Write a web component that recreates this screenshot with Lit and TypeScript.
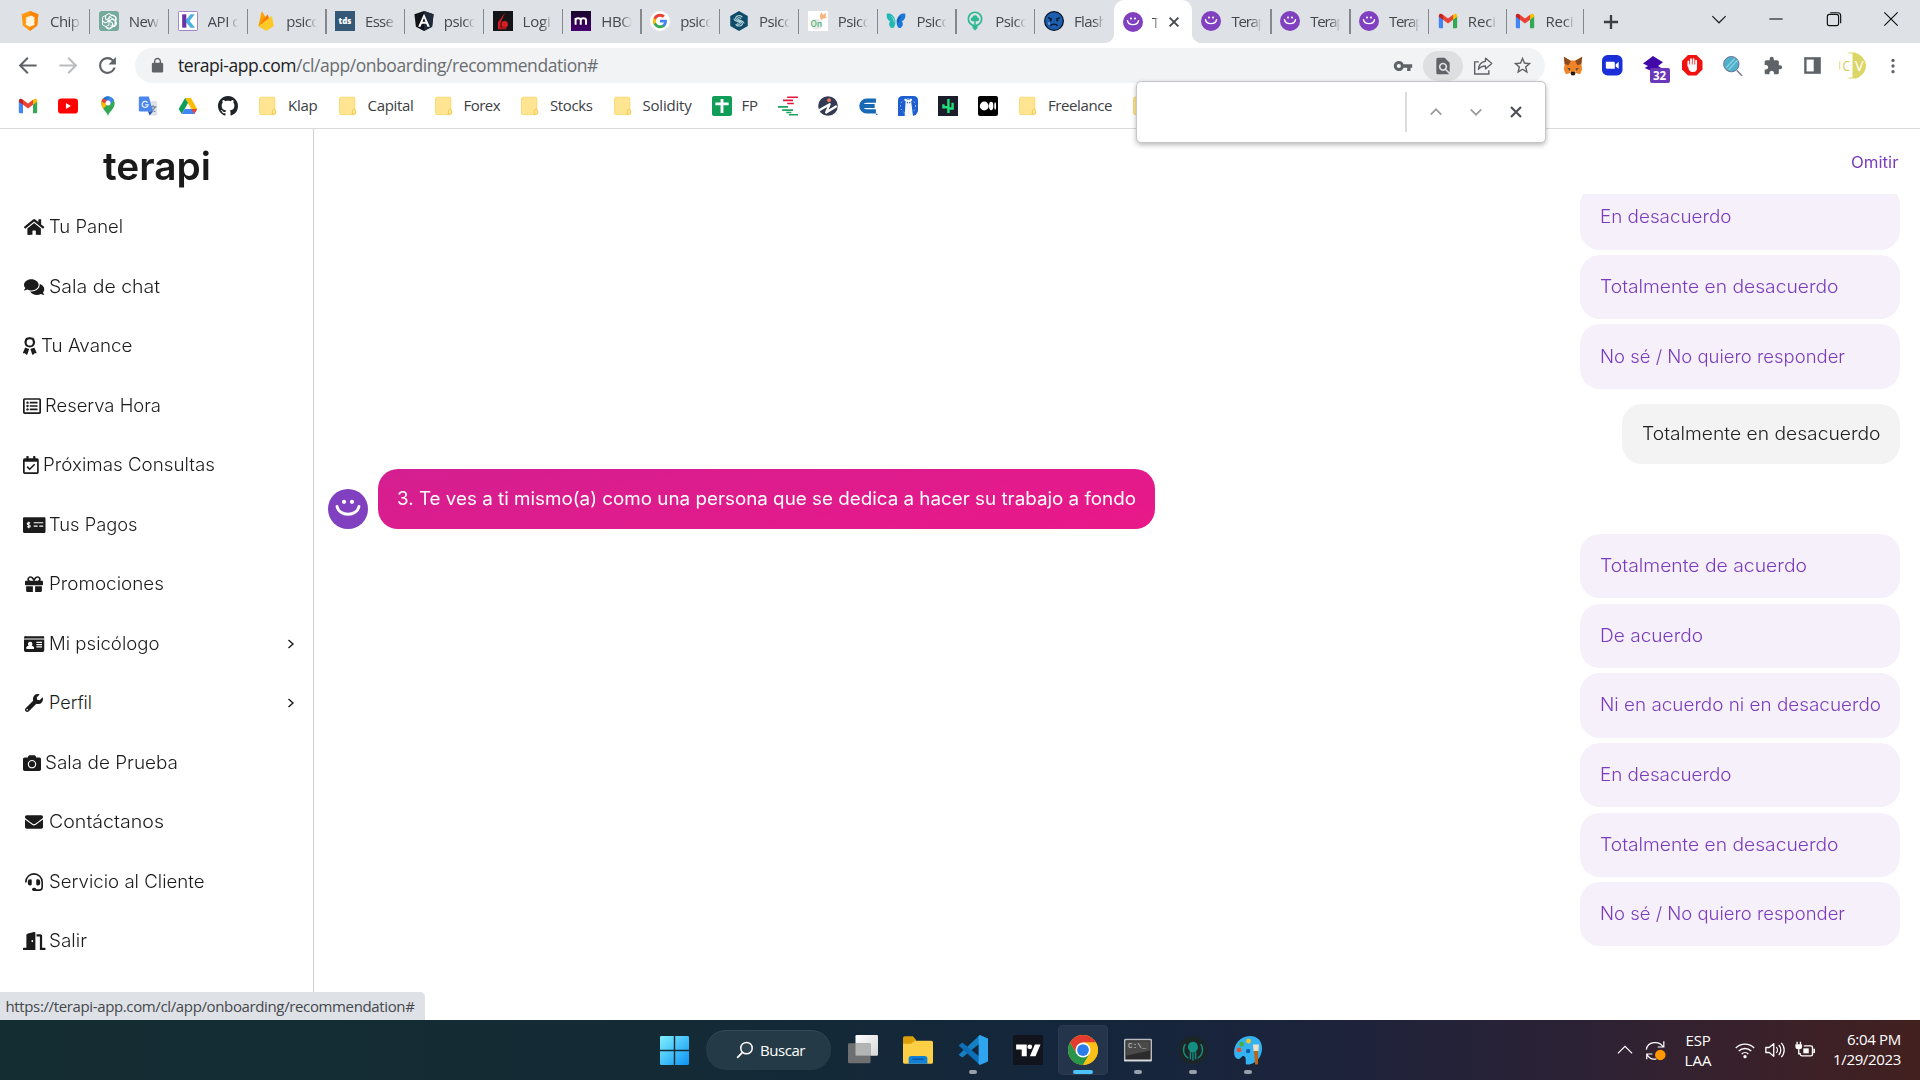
import { LitElement, html, svg, css, nothing, TemplateResult } from "lit";
import { customElement, property } from "lit/decorators.js";
import { classMap } from "lit/directives/class-map.js";

type Art = TemplateResult;

const smile = svg`<circle cx="12" cy="12" r="12" fill="#8040bf"/><circle cx="9.6" cy="7.700" r="1.25" fill="#fff"/><circle cx="14.4" cy="7.700" r="1.25" fill="#fff"/><path d="M5.4 10.400c1 6.300 12.200 6.300 13.200 0" fill="none" stroke="#fff" stroke-width="1.700" stroke-linecap="round"/>`;
const gmail = svg`<path d="M1 19.5V6l5 3.6v11.2H2.3A1.3 1.3 0 0 1 1 19.5z" fill="#4285f4"/><path d="M23 19.5V6l-5 3.6v11.2h3.7a1.3 1.3 0 0 0 1.3-1.3z" fill="#34a853"/><path d="M6 4.6l6 4.5 6-4.5v6L12 15l-6-4.4z" fill="#ea4335"/><path d="M1 5.600C1 3 3.600 2.600 5 3.800l1 .8v6L1 7z" fill="#c5221f"/><path d="M23 5.600c0-2.600-2.600-3-4-1.800l-1 .8v6L23 7z" fill="#fbbc04"/>`;
const folder = svg`<path d="M3.400 1.500h15.200a1.600 1.600 0 0 1 1.600 1.600v13.400l.8 1.200v2.600a2 2 0 0 1-2 2H3.400a1.600 1.600 0 0 1-1.600-1.600V3.100a1.600 1.600 0 0 1 1.600-1.600z" fill="#ffe591" stroke="#f8d568" stroke-width="1"/><path d="M17.200 22v-4.200c0-2.400 4-2.400 4 0v2.400c0 1.200-1 1.800-2.200 1.800z" fill="#ffe591" stroke="#eec94e" stroke-width="1.100"/>`;

const art: Record<string, Art> = {
  smile,
  gmail,
  folder,
  chip: svg`<path d="M12 0l10 3.800-1.300 13.600L12 24 3.300 17.400 2 3.800z" fill="#ff980e"/><path d="M12 0l10 3.800-1.300 13.600L12 24z" fill="#ff8508"/><path d="M7 8l6.500-2.500 4 2.200v2l-1 .8 1 .7v2l-1 .9 1 .8v1.600L12 19l-5-2.600v-2l1-.9-1-.9v-1.700l1-.9L7 9z" fill="#fff5e0"/>`,
  gpt: svg`<rect width="24" height="24" rx="4" fill="#75a99b"/><g fill="none" stroke="#fff" stroke-width="1.200"><path d="M12 12V7.200l4-2.200c5 0 6 5 3.500 7.500"/><path d="M9 10.300l4.500-2.700 5.300 3.200c2.200 4.200-1.500 7.700-5 6.700"/><path d="M12 12V7.200l4-2.200c5 0 6 5 3.500 7.500" transform="rotate(60 12 12)"/><path d="M12 12V7.200l4-2.200c5 0 6 5 3.500 7.500" transform="rotate(120 12 12)"/><path d="M12 12V7.200l4-2.200" transform="rotate(180 12 12)"/><path d="M12 12V7.200l4-2.200" transform="rotate(240 12 12)"/><path d="M12 12V7.200l4-2.200" transform="rotate(300 12 12)"/><path d="M12 3l7.800 4.500v9L12 21l-7.800-4.500v-9z" stroke-linejoin="round"/></g>`,
  klap: svg`<rect x=".5" y=".5" width="23" height="23" rx="1.500" fill="#fff" stroke="#9a7cc4" stroke-width="1.200"/><path d="M5 4h5v16H5z" fill="#6d2fa8"/><path d="M20 4h-5l-6.500 8L15 20h5.500L14 12z" fill="#4db0e0"/><path d="M10 10l-2 2 2 2z" fill="#1f5ea8"/>`,
  firebase: svg`<path d="M3 18L6.500 1.500c.1-.6.900-.7 1.200-.2L18 18l-6.500 5z" fill="#ffa000"/><path d="M3 18L13 5c.3-.5 1-.5 1.300 0l3 7z" fill="#f57c00"/><path d="M3 18L18.200 6.500c.4-.4 1-.2 1.100.3L21.500 18l-8 5.200c-.8.500-1.700.5-2.500 0z" fill="#ffca28"/>`,
  tds: svg`<rect width="24" height="24" fill="#355876"/><text x="12" y="15.600" text-anchor="middle" font-family="Open Sans, sans-serif" font-weight="800" font-size="9.500" fill="#fff">tds</text>`,
  angular: svg`<path d="M12 0l11.500 4-1.800 15L12 24l-9.700-5L.5 4z" fill="#111318"/><path d="M12 0l11.500 4-1.800 15L12 24z" fill="#1f2a3a"/><path d="M12 3.200L5 18.800h2.900l1.400-3.500h5.400l1.400 3.500H19zm0 5.300l1.900 4.500h-3.800z" fill="#fff" fill-rule="evenodd"/>`,
  logi: svg`<rect width="24" height="24" fill="#151416"/><path d="M14.500 2L6 13.500V22h3v-7.500z" fill="#d81e24"/><circle cx="14" cy="16" r="3.900" fill="#d81e24"/><path d="M8 19h8v3H7z" fill="#a8161b"/>`,
  hbo: svg`<defs><linearGradient id="hb" x2="0" y2="1"><stop stop-color="#170728"/><stop offset="1" stop-color="#45006e"/></linearGradient></defs><rect width="24" height="24" fill="url(#hb)"/><path d="M5.500 16.500V8.500M5.500 11c0-3.200 6.200-3.200 6.200 0v5.500M11.700 11c0-3.200 6.300-3.200 6.300 0v5.500" fill="none" stroke="#fff" stroke-width="2.400"/>`,
  google: svg`<circle cx="12" cy="12" r="12" fill="#fff"/><g transform="translate(2.600 2.600) scale(.785)"><path d="M22.560 12.250c0-.78-.07-1.530-.2-2.250H12v4.260h5.920c-.26 1.370-1.040 2.530-2.210 3.310v2.770h3.570c2.080-1.920 3.280-4.740 3.280-8.090z" fill="#4285f4"/><path d="M12 23c2.970 0 5.460-.98 7.280-2.660l-3.570-2.770c-.98.66-2.230 1.060-3.710 1.060-2.860 0-5.290-1.930-6.160-4.530H2.180v2.840C3.990 20.530 7.700 23 12 23z" fill="#34a853"/><path d="M5.840 14.090c-.22-.66-.35-1.360-.35-2.090s.13-1.430.35-2.090V7.070H2.180C1.430 8.550 1 10.220 1 12s.43 3.450 1.180 4.930z" fill="#fbbc05"/><path d="M12 5.380c1.620 0 3.060.56 4.210 1.640l3.150-3.150C17.450 2.090 14.970 1 12 1 7.700 1 3.990 3.470 2.180 7.070l3.660 2.840c.87-2.600 3.300-4.530 6.160-4.530z" fill="#ea4335"/></g>`,
  hexa: svg`<path d="M12 0l10.500 6v12L12 24 1.500 18V6z" fill="#0f4c68"/><path d="M16 7.500c-2-3-8-2.300-8 1.200 0 4 8 2.500 8 6.300 0 3.500-6 4-8 1M14.500 9c-1.500-1.500-4.500-1-4 .5.500 1.800 7.500 1.500 7.500 5.500M9.500 15c1.500 1.500 4.500 1 4-.5-.5-1.800-7.500-1.500-7.500-5.500" fill="none" stroke="#b8d8dc" stroke-width="1.300"/>`,
  onp: svg`<rect width="24" height="24" fill="#fff"/><circle cx="10.500" cy="16" r="6.500" fill="#e9e9e9"/><text x="10" y="19" text-anchor="middle" font-family="Inter, sans-serif" font-weight="600" font-size="10" fill="#5cb883">On</text><path d="M14 6.500l2-5 2 3 4-2-1 4 2 2-5 .5-2 2z" fill="#f7b27e"/>`,
  butterfly: svg`<path d="M11.300 12C10 5 5 2 .8 3.500c-.5 4 1 7.500 4.200 8.800-2 2-1.500 6.500 1.500 8 3 1 4.400-2.300 4.700-6z" fill="#22b8b4"/><path d="M12.700 12C14 5 19 2 23.200 3.500c.5 4-1 7.500-4.200 8.800 2 2 1.500 6.500-1.500 8-3 1-4.400-2.300-4.700-6z" fill="#1c78d8"/><path d="M6.500 6.500c2 1.500 3.200 4 3.400 7" stroke="#8fe0dc" stroke-width="1.200" fill="none"/><path d="M17.500 6.500c-2 1.500-3.200 4-3.400 7" stroke="#0f58a4" stroke-width="1.600" fill="none"/>`,
  bulb: svg`<circle cx="12" cy="9.500" r="8" fill="none" stroke="#2fb895" stroke-width="2"/><path d="M12 23.500l-3-3v-3h6v3z" fill="#2fb895"/><path d="M12 5a3.200 3.200 0 0 1 3.200 2.700c2.600.5 2.600 4.500-.7 4.500-1 0-1.500-.3-2.500-.3s-1.500.3-2.500.3c-3.300 0-3.300-4-.7-4.500A3.200 3.200 0 0 1 12 5z" fill="#2fb895"/><path d="M12 10v8" stroke="#2fb895" stroke-width="1.800"/>`,
  flash: svg`<circle cx="12" cy="12" r="11.200" fill="#1d5fae" stroke="#07162a" stroke-width="1.600"/><path d="M5 8l4.500 2M19 8l-4.500 2M7.500 18c2-3 7-3 9 0" stroke="#07162a" stroke-width="1.600" fill="none"/><circle cx="8" cy="11.500" r="1.200" fill="#07162a"/><circle cx="16" cy="11.500" r="1.200" fill="#07162a"/><path d="M6 13.500v3" stroke="#9fd0ff" stroke-width="1.200"/>`,
  youtube: svg`<rect y="3" width="24" height="18" rx="4" fill="#f00"/><path d="M9.500 8.500v7l6-3.500z" fill="#fff"/>`,
  maps: svg`<path d="M12 24c-1-5-8-8-8-15.500A8 8 0 0 1 12 .5a8 8 0 0 1 8 8C20 16 13 19 12 24z" fill="#34a853"/><path d="M4 8.500C4 11.500 5 13.500 6.500 15.300L14.500 6 8 1.600A8 8 0 0 0 4 8.500z" fill="#fbbc04"/><path d="M6 3.300a8 8 0 0 1 8.500-2.500L8.500 8z" fill="#1a73e8"/><path d="M6 3.300A8 8 0 0 0 4.200 7L9 9l3-4z" fill="#ea4335"/><path d="M14.400.8A8 8 0 0 1 19 4.700L14 11l-4-4.500z" fill="#4285f4"/><circle cx="12" cy="8.500" r="3" fill="#fff"/>`,
  translate: svg`<path d="M9 6h12.500a1.500 1.500 0 0 1 1.500 1.500V22a1.500 1.500 0 0 1-1.500 1.500H14z" fill="#dfe3e8"/><path d="M14 13h8M18 11v2M20.500 13c-1 3-3 5-5 6M15.800 14c1 2.500 3 4.500 5 5" stroke="#6f7f94" stroke-width="1.300" fill="none"/><path d="M2.500.5H13L18 18.500H2.500A1.500 1.500 0 0 1 1 17V2A1.500 1.500 0 0 1 2.500.5z" fill="#4a86ee"/><path d="M12 18.500h6l-4 5z" fill="#2b56b5"/><path d="M11.500 8A3.600 3.600 0 1 0 12.200 10.500H8.600" fill="none" stroke="#e8f0ff" stroke-width="1.500"/>`,
  drive: svg`<path d="M8.500 2.500h7L23 15.500h-7z" fill="#fbbc04"/><path d="M8.500 2.500L.8 15.500 4.500 21.500 12 8.500z" fill="#0f9d58"/><path d="M4.500 21.500L8 15.500h15l-3.500 6z" fill="#4285f4"/><path d="M23 15.500h-7l3.500 6z" fill="#ea4335"/>`,
  github: svg`<path transform="scale(1.500)" fill="#1f2328" d="M8 0C3.580 0 0 3.580 0 8c0 3.540 2.290 6.530 5.470 7.590.4.07.55-.17.55-.38 0-.19-.01-.82-.01-1.490-2.010.37-2.530-.49-2.690-.94-.09-.23-.48-.94-.82-1.130-.28-.15-.68-.52-.01-.53.63-.01 1.080.58 1.230.82.72 1.210 1.870.87 2.330.66.07-.52.28-.87.51-1.070-1.780-.2-3.640-.89-3.640-3.950 0-.87.31-1.590.82-2.150-.08-.2-.36-1.020.08-2.120 0 0 .67-.21 2.200.82.64-.18 1.320-.27 2-.27s1.360.09 2 .27c1.530-1.040 2.200-.82 2.200-.82.44 1.100.16 1.920.08 2.120.51.56.82 1.270.82 2.150 0 3.070-1.870 3.750-3.650 3.950.29.25.54.73.54 1.480 0 1.070-.01 1.930-.01 2.200 0 .21.15.46.55.38A8.010 8.010 0 0 0 16 8c0-4.420-3.580-8-8-8z"/>`,
  sheets: svg`<rect width="24" height="24" rx="2.500" fill="#109d58"/><path d="M12 3.500v17M4 9.500h16" stroke="#fff" stroke-width="3.400"/>`,
  bars: svg`<path d="M11 1.500h13M6 5.300h12M11 9h8" stroke="#e0193c" stroke-width="2"/><path d="M0 13h12M5 17h13M13 22.500h11M10 19.800h6" stroke="#1fa35c" stroke-width="2"/>`,
  indie: svg`<circle cx="12" cy="12" r="11.800" fill="#333a54"/><path d="M1 17.500L14 9.800l-4.200 10L22.500 12" fill="none" stroke="#fff" stroke-width="2.700" stroke-linejoin="round"/><circle cx="13.300" cy="5" r="2.300" fill="#f17b62"/>`,
  cblue: svg`<path d="M21.500 5.500H10.500a6.500 6.500 0 0 0 0 13h11M3 12h17" fill="none" stroke="#1769b4" stroke-width="5"/><path d="M11 9h12M11 15h12" stroke="#fff" stroke-width="1.200"/><circle cx="22.500" cy="22" r="1" fill="#1769b4"/>`,
  bear: svg`<rect width="24" height="24" rx="4" fill="#fff"/><path d="M0 24V5a5 5 0 0 1 5-5h14a5 5 0 0 1 5 5v12a7 7 0 0 1-7 7z" fill="#1e5fd0"/><circle cx="12" cy="12" r="9" fill="none" stroke="#dbe8fb" stroke-width="1.200" stroke-dasharray="1.300 3.300"/><path d="M8 24L9 8c0-5 7-5 7 0l2 16z" fill="#f4f8fc"/><circle cx="9.300" cy="4.800" r="1.500" fill="#f4f8fc"/><circle cx="15.200" cy="4.800" r="1.500" fill="#f4f8fc"/><circle cx="11.300" cy="8" r=".7" fill="#173f86"/><circle cx="14" cy="8" r=".7" fill="#173f86"/>`,
  cactus: svg`<rect width="24" height="24" fill="#1c1d2b"/><path d="M12.500 3.500v17M6.500 10v3.500h6M12.500 15h5V8" fill="none" stroke="#1fe07a" stroke-width="2.900"/>`,
  medium: svg`<rect width="24" height="24" rx="2.500" fill="#000"/><circle cx="7.500" cy="12" r="5.300" fill="#fff"/><ellipse cx="15.800" cy="12" rx="2.600" ry="5" fill="#fff"/><ellipse cx="20.600" cy="12" rx="1.100" ry="4.600" fill="#fff"/>`,
  fox: svg`<path d="M1 1l8 4.500h6L23 1l-1 9 1 6-2.500 6-5-1.500L13.500 23h-3L8.500 20.500l-5 1.500L1 16l1-6z" fill="#f08326"/><path d="M1 1l8.500 5-3 5L2 9.500zM23 1l-8.500 5 3 5 4.500-1.500z" fill="#8a4a22"/><path d="M5 14l4 1-1 3zM19 14l-4 1 1 3z" fill="#4a4a48"/><path d="M9 19h6l-1 4h-4z" fill="#1e1a19"/><path d="M8 18l2 1-1 1.500zM16 18l-2 1 1 1.500z" fill="#f0d8c0"/>`,
  zoomcam: svg`<rect width="24" height="24" rx="6.500" fill="#1b2fd8"/><path d="M4.500 8h9a1.500 1.500 0 0 1 1.500 1.500V16H6a1.500 1.500 0 0 1-1.500-1.500z" fill="#fff"/><path d="M16 11l3.500-3v8L16 13.500z" fill="#fff"/>`,
  stack: svg`<path d="M12 0l12 7.500-6 4.500 6 3.500-9 4.500-13-5.500 4-2.500L0 9z" fill="#4209a8"/>`,
  hand: svg`<path d="M7 0h10l7 7v10l-7 7H7l-7-7V7z" fill="#f0120f"/><path d="M7.500 13V7.500M10.500 12V5M13.500 12V5M16.500 13V6.500" stroke="#fff" stroke-width="2.100" stroke-linecap="round"/><path d="M6.500 11h11v4.500c0 3-2 4.500-4.500 4.500s-4-1-5-3z" fill="#fff"/>`,
  magnify: svg`<path d="M16.500 17l6.500 7" stroke="#7a7f96" stroke-width="1.800"/><circle cx="10" cy="9.800" r="9.200" fill="#4fb0ca" stroke="#6c7394" stroke-width="1.200"/><path d="M4 14L14 3M7 16.500L17.500 5" stroke="#8fd3e4" stroke-width="1.500"/>`,
  panel: svg`<path d="M1.500 1.500h21v21h-21z" fill="#5f6368"/><path d="M4.500 4.500h9v15h-9z" fill="#fff"/>`,
  avatar: svg`<path d="M16 .5h3C26 3 32 9 32 16s-5 13-12 15.500h-4z" fill="#dcd666"/><path d="M9 1.500Q12 .3 16 .3v1.500zM9 30.500q3 1.200 7 1.200v-1.500z" fill="#dcd666"/><path d="M.8 11v10" stroke="#dcd666"/><text x="8.700" y="22.300" text-anchor="middle" font-family="Open Sans, sans-serif" font-size="17" textLength="9" lengthAdjust="spacingAndGlyphs" fill="#d6cf58">C</text><text x="24" y="22.300" text-anchor="middle" font-family="Open Sans, sans-serif" font-size="17" fill="#fff">V</text>`,
  newtab: svg`<path d="M12 3.500v17M3.500 12h17" stroke="#3c4043" stroke-width="2.800"/>`,
  x: svg`<path d="M4.500 4.500l15 15M19.500 4.500l-15 15" stroke="currentColor" stroke-width="3.200" fill="none"/>`,
  up: svg`<path d="M4 16l8-8 8 8" stroke="#9a9da1" stroke-width="2.600" fill="none"/>`,
  down: svg`<path d="M4 8l8 8 8-8" stroke="#9a9da1" stroke-width="2.600" fill="none"/>`,
  wchev: svg`<path d="M4 8.500l8 8 8-8" stroke="#222" stroke-width="1.500" fill="none"/>`,
  wmin: svg`<path d="M4 12h16" stroke="#111" stroke-width="1.300"/>`,
  wmax: svg`<rect x="4" y="6.500" width="13.500" height="13.500" rx="2.500" fill="none" stroke="#111" stroke-width="1.400"/><path d="M7.500 4.500h9a3.500 3.500 0 0 1 3.500 3.500v9" fill="none" stroke="#111" stroke-width="1.400"/>`,
  wclose: svg`<path d="M4 4l16 16M20 4L4 20" stroke="#111" stroke-width="1.400"/>`,
  back: svg`<path fill="#5f6368" d="M21.500 11H6.800l6.300-6.400L11.600 3.200 2.800 12l8.800 8.800 1.500-1.400L6.800 13h14.700z"/>`,
  fwd: svg`<path fill="#babcbe" d="M2.500 11h14.700l-6.300-6.400 1.500-1.400 8.800 8.800-8.800 8.800-1.500-1.400 6.300-6.400H2.500z"/>`,
  reload: svg`<path fill="#5f6368" transform="translate(-2.400 -2.400) scale(1.200)" d="M17.650 6.350A7.958 7.958 0 0 0 12 4c-4.420 0-7.990 3.580-7.990 8s3.570 8 7.990 8c3.730 0 6.840-2.550 7.730-6h-2.080A5.990 5.990 0 0 1 12 18c-3.310 0-6-2.690-6-6s2.690-6 6-6c1.660 0 3.140.69 4.220 1.780L13 11h7V4z"/>`,
  lock: svg`<path fill="#5f6368" d="M18 8h-1V6c0-2.760-2.240-5-5-5S7 3.240 7 6v2H6c-1.100 0-2 .9-2 2v10c0 1.100.9 2 2 2h12c1.100 0 2-.9 2-2V10c0-1.100-.9-2-2-2zM9 8V6c0-1.660 1.340-3 3-3s3 1.340 3 3v2H9z"/>`,
  key: svg`<path fill="#5f6368" d="M12.650 10A5.990 5.990 0 0 0 7 6c-3.310 0-6 2.690-6 6s2.690 6 6 6a5.990 5.990 0 0 0 5.650-4H17v4h4v-4h2v-4H12.650zM7 14.500a2.500 2.500 0 1 1 0-5 2.500 2.500 0 0 1 0 5z"/>`,
  find: svg`<path fill="#5f6368" d="M20 19.590V8l-6-6H6c-1.100 0-1.990.9-1.990 2L4 20c0 1.100.89 2 1.990 2H18c.45 0 .85-.15 1.190-.4l-4.430-4.430c-.8.52-1.740.83-2.760.83-2.760 0-5-2.240-5-5s2.240-5 5-5 5 2.240 5 5c0 1.020-.31 1.960-.83 2.750L20 19.590zM9 13c0 1.660 1.340 3 3 3s3-1.340 3-3-1.340-3-3-3-3 1.340-3 3z"/>`,
  share: svg`<path d="M7 7H2v14.500h17V17" fill="none" stroke="#5f6368" stroke-width="1.700"/><path d="M15 2.500l7.500 6.500L15 15.500V12c-4 0-6.500 1.200-8.500 4C7 10.500 10 7 15 6.300z" fill="none" stroke="#5f6368" stroke-width="1.600" stroke-linejoin="round"/>`,
  star: svg`<path fill="#5f6368" d="M22 9.240l-7.190-.62L12 2 9.190 8.630 2 9.240l5.460 4.730L5.820 21 12 17.270 18.180 21l-1.630-7.030L22 9.240zM12 15.400l-3.760 2.270 1-4.280-3.320-2.880 4.380-.38L12 6.100l1.710 4.040 4.380.38-3.320 2.880 1 4.280L12 15.400z"/>`,
  puzzle: svg`<path fill="#5f6368" d="M20.500 11H19V7c0-1.100-.9-2-2-2h-4V3.500a2.500 2.500 0 0 0-5 0V5H4c-1.100 0-1.990.9-1.990 2v3.800H3.500c1.490 0 2.700 1.210 2.700 2.700s-1.210 2.700-2.700 2.700H2V20c0 1.100.9 2 2 2h3.800v-1.500c0-1.490 1.210-2.700 2.700-2.700s2.700 1.210 2.700 2.700V22H17c1.100 0 2-.9 2-2v-4h1.500a2.500 2.500 0 0 0 0-5z"/>`,
  dots: svg`<circle cx="12" cy="4.500" r="2.200" fill="#5f6368"/><circle cx="12" cy="12" r="2.200" fill="#5f6368"/><circle cx="12" cy="19.500" r="2.200" fill="#5f6368"/>`,
  start: svg`<defs><linearGradient id="st" gradientUnits="userSpaceOnUse" x1="0" y1="0" x2="24" y2="24"><stop stop-color="#7ff0fd"/><stop offset="1" stop-color="#0c93f5"/></linearGradient></defs><path d="M1 0h10.400v11.400H0V1a1 1 0 0 1 1-1zM12.600 0H23a1 1 0 0 1 1 1v10.400H12.600zM0 12.600h11.400V24H1a1 1 0 0 1-1-1zM12.600 12.600H24V23a1 1 0 0 1-1 1H12.600z" fill="url(#st)"/>`,
  search: svg`<circle cx="14" cy="9.500" r="7.600" fill="#2d4350" stroke="#fff" stroke-width="2"/><path d="M8.600 15.200L1.500 22.500" stroke="#fff" stroke-width="2.400"/>`,
  taskview: svg`<defs><linearGradient id="tv1" x2="1" y2="1"><stop stop-color="#fff"/><stop offset="1" stop-color="#d6d6d6"/></linearGradient></defs><rect x="6" y="0" width="18" height="16.500" rx="1" fill="url(#tv1)"/><rect x="0" y="6.500" width="18" height="16" rx="1" fill="#6d6f70"/><path d="M6 6.500h12v10H6z" fill="#b3b5b5"/>`,
  explorer: svg`<path d="M0 2.500A1.500 1.500 0 0 1 1.500 1H8l2.500 3v5H0z" fill="#dba009"/><path d="M0 7h6.500l3-2.500h13A1.500 1.500 0 0 1 24 6v15.500a1.500 1.500 0 0 1-1.500 1.500h-21A1.500 1.500 0 0 1 0 21.500z" fill="#fccf45"/><path d="M4.500 23v-4a2.200 2.200 0 0 1 2.200-2.200h10.600a2.200 2.200 0 0 1 2.200 2.200v4z" fill="#1380d8"/><path d="M7.500 19.300h9" stroke="#0a57a4" stroke-width="1.200"/>`,
  vscode: svg`<path d="M17.500 0v6.500L3.500 18 .5 15.700z" fill="#1580c4"/><path d="M17.500 24v-6.500L3.500 6 .5 8.300z" fill="#0d6fb5"/><path d="M17.500 0L24 2.800v18.400L17.500 24l-1-1V1z" fill="#2ea5ee"/>`,
  tradingview: svg`<rect width="24" height="24" fill="#11141d"/><path d="M2.500 7.500h8.500v9.500H7v-5.500H2.500z" fill="#fff"/><circle cx="13.400" cy="9.400" r="1.900" fill="#fff"/><path d="M17.500 7.500h4.500L18 17h-4.500z" fill="#fff"/>`,
  chrome: svg`<circle cx="12" cy="12" r="12" fill="#fbc116"/><path d="M12 6h10.390A12 12 0 0 0 1.610 6l5.200 9z" fill="#e33b2e"/><path d="M1.610 6A12 12 0 0 0 12 24l5.200-9L6.800 15z" fill="#27964a"/><path d="M17.200 15L12 24A12 12 0 0 0 22.390 6H12z" fill="#fbc116"/><circle cx="12" cy="12" r="6" fill="#fff"/><circle cx="12" cy="12" r="4.700" fill="#2b7de9"/>`,
  cmd: svg`<rect x=".5" y="3" width="23" height="18" rx="1" fill="#2b2b2b" stroke="#b9bcc0" stroke-width="1.400"/><path d="M2 4.500h20v8L2 17z" fill="#4a4a4a"/><path d="M0 21h23.500" stroke="#d5d9dc" stroke-width="1.500"/><text x="3.500" y="10.500" font-family="Liberation Mono, monospace" font-size="6.500" fill="#d8d8d8">C:\\_</text>`,
  kraken: svg`<circle cx="12" cy="12" r="12" fill="#1c2626"/><path d="M12 5c-3 0-4.600 3-4.200 5.500.3 1.500 1.700 2 1.700 3.500h5c0-1.500 1.400-2 1.700-3.500C16.600 8 15 5 12 5z" fill="#148f80"/><path d="M9.800 14v6M12 14v7M14.200 14v6M8 19c-5-3-5-9-2.500-12M16 19c5-3 5-9 2.500-12" fill="none" stroke="#148f80" stroke-width="1.200"/>`,
  paint: svg`<path d="M14 0C6 0 0 7 1 15c.4 4 4 5 5.500 3s3.500-2 4 1c.4 4-1 5 3 4.500C21 22 24 16 24 10S20 0 14 0z" fill="#35b3f0"/><circle cx="5" cy="11.500" r="2" fill="#e8512e"/><circle cx="7" cy="6.800" r="2" fill="#4caf3c"/><circle cx="12.800" cy="4.200" r="2" fill="#f5c523"/><circle cx="12.500" cy="12.500" r="1.800" fill="#0b5aa8"/><path d="M16.500 7h5l-.5 5.500h-4z" fill="#f1dfc4"/><path d="M17.300 12.500h3.400v11h-2.400z" fill="#b8651b"/>`,
  tchev: svg`<path d="M2.500 16.500L12 7l9.500 9.500" stroke="#fff" stroke-width="1.600" fill="none"/>`,
  sync: svg`<path d="M1.500 11C3 1.500 16 .5 20.500 7.500M21.500 1.500v6.500h-7M2 22v-6h6.500M2 16c2.500 5 7 6.500 11 5.500" fill="none" stroke="#fff" stroke-width="1.400"/><circle cx="17.500" cy="17" r="6" fill="#ff9800"/>`,
  wifi: svg`<path d="M1 9.500a15.500 15.500 0 0 1 22 0M4.500 13.300a10.600 10.600 0 0 1 15 0M8 16.800a5.700 5.700 0 0 1 8 0" fill="none" stroke="#fff" stroke-width="1.700"/><circle cx="12" cy="20" r="2" fill="#fff"/>`,
  volume: svg`<path d="M1 9h4l5.500-4.500v15L5 15H1z" fill="none" stroke="#fff" stroke-width="1.600" stroke-linejoin="round"/><path d="M13.500 8.500a5 5 0 0 1 0 7M16.500 6a8.500 8.500 0 0 1 0 12M19.500 3.500a12 12 0 0 1 0 17" fill="none" stroke="#fff" stroke-width="1.500"/>`,
  battery: svg`<path d="M10.500 7H19a2 2 0 0 1 2 2v8a2 2 0 0 1-2 2H8.500a2 2 0 0 1-2-2" fill="none" stroke="#fff" stroke-width="1.700"/><path d="M23 10.500v5" stroke="#fff" stroke-width="2"/><path d="M10 16v-6h6.500v6z" fill="#fff"/><path d="M.5 5h8v3.500a2.500 2.500 0 0 1-2.500 2.500H3A2.500 2.500 0 0 1 .5 8.500z" fill="#fff"/><path d="M2.500 2v3.500M6.500 2v3.500M4.500 11v5.500H7" stroke="#fff" stroke-width="1.600" fill="none"/>`,
};

/* Solid glyphs for the side menu, drawn on a 512-unit high grid. */
const glyphs: Record<string, { w: number; d: Art }> = {
  home: { w: 576, d: svg`<path d="M280.370 148.260L96 300.110V464a16 16 0 0 0 16 16l112.060-.29a16 16 0 0 0 15.920-16V368a16 16 0 0 1 16-16h64a16 16 0 0 1 16 16v95.640a16 16 0 0 0 16 16.050L464 480a16 16 0 0 0 16-16V300L295.670 148.260a12.190 12.190 0 0 0-15.300 0zM571.600 251.470L488 182.560V44.050a12 12 0 0 0-12-12h-56a12 12 0 0 0-12 12v72.610L318.470 43a48 48 0 0 0-61 0L4.340 251.470a12 12 0 0 0-1.600 16.900l25.500 31A12 12 0 0 0 45.150 301l235.220-193.740a12.190 12.190 0 0 1 15.300 0L530.900 301a12 12 0 0 0 16.900-1.600l25.500-31a12 12 0 0 0-1.700-16.930z"/>` },
  comments: { w: 576, d: svg`<path d="M416 192c0-88.400-93.100-160-208-160S0 103.600 0 192c0 34.300 14.100 65.900 38 92-13.400 30.200-35.500 54.200-35.800 54.500-2.200 2.300-2.800 5.700-1.500 8.700S4.800 352 8 352c36.600 0 66.900-12.300 88.700-25 32.200 15.700 70.300 25 111.300 25 114.900 0 208-71.600 208-160zm122 220c23.900-26 38-57.700 38-92 0-66.900-53.500-124.200-129.300-148.100.9 6.600 1.300 13.300 1.300 20.100 0 105.900-107.700 192-240 192-10.800 0-21.300-.8-31.700-1.900C207.800 439.600 281.800 480 368 480c41 0 79.100-9.200 111.300-25 21.800 12.700 52.100 25 88.700 25 3.200 0 6.100-1.900 7.300-4.800 1.300-2.900.7-6.300-1.500-8.700-.3-.3-22.400-24.200-35.800-54.500z"/>` },
  award: { w: 384, d: svg`<path fill-rule="evenodd" d="M192 0l48 14 46 10 34 36 14 46 12 38-12 46-14 46-34 34-46 16-48 12-48-12-46-16-34-34-14-46-12-46 12-38 14-46 34-36 46-10zm0 66a88 88 0 1 0 0 176 88 88 0 0 0 0-176z"/><path d="M62 300c36 34 66 18 112 38l-52 158c-4 12-18 16-28 8l-40-44-38 4c-14 0-22-12-16-24zM322 300c-36 34-66 18-112 38l52 158c4 12 18 16 28 8l40-44 38 4c14 0 22-12 16-24z"/>` },
  list: { w: 512, d: svg`<path fill-rule="evenodd" d="M464 32H48C21.490 32 0 53.490 0 80v352c0 26.510 21.490 48 48 48h416c26.510 0 48-21.490 48-48V80c0-26.510-21.490-48-48-48zm-6 400H54a6 6 0 0 1-6-6V86a6 6 0 0 1 6-6h404a6 6 0 0 1 6 6v340a6 6 0 0 1-6 6z"/><path d="M192 136h212a12 12 0 0 1 12 12v24a12 12 0 0 1-12 12H192zM192 232h212a12 12 0 0 1 12 12v24a12 12 0 0 1-12 12H192zM192 328h212a12 12 0 0 1 12 12v24a12 12 0 0 1-12 12H192z"/><circle cx="128" cy="160" r="34"/><circle cx="128" cy="256" r="34"/><circle cx="128" cy="352" r="34"/>` },
  calendar: { w: 448, d: svg`<path fill-rule="evenodd" d="M400 64h-48V12a12 12 0 0 0-12-12h-40a12 12 0 0 0-12 12v52H160V12a12 12 0 0 0-12-12h-40a12 12 0 0 0-12 12v52H48a48 48 0 0 0-48 48v352a48 48 0 0 0 48 48h352a48 48 0 0 0 48-48V112a48 48 0 0 0-48-48zm-6 400H54a6 6 0 0 1-6-6V160h352v298a6 6 0 0 1-6 6z"/><path d="M118 304l72 72 142-142" fill="none" stroke="currentColor" stroke-width="46"/>` },
  money: { w: 640, d: svg`<path fill-rule="evenodd" d="M30 32h580a30 30 0 0 1 30 30v388a30 30 0 0 1-30 30H30a30 30 0 0 1-30-30V62a30 30 0 0 1 30-30zm274 144v32h272v-32zm0 96v34h112v-34zm160 0v34h112v-34z"/><path d="M204 206c-30-28-84-20-84 14 0 42 88 24 88 66 0 38-58 42-88 12M162 164v184" fill="none" stroke="#fff" stroke-width="30"/>` },
  gift: { w: 512, d: svg`<path d="M32 448c0 17.700 14.300 32 32 32h160V320H32zM288 480h160c17.700 0 32-14.300 32-32V320H288z"/><path fill-rule="evenodd" d="M480 160h-42c6-12 10-26 10-40 0-49-39-88-88-88-41 0-68 21-103 69-35-48-62-69-103-69-49 0-88 39-88 88 0 14 4 28 10 40H32c-18 0-32 14-32 32v80c0 9 7 16 16 16h480c9 0 16-7 16-16v-80c0-18-14-32-32-32zm-326 0c-22 0-40-18-40-40s18-40 40-40c20 0 34 3 86 80zm204 0h-86c52-77 66-80 86-80 22 0 40 18 40 40s-18 40-40 40z"/>` },
  idcard: { w: 576, d: svg`<path d="M48 32h480a48 48 0 0 1 48 40v24H0V72a48 48 0 0 1 48-40z"/><path fill-rule="evenodd" d="M0 128h576v304a48 48 0 0 1-48 48H48a48 48 0 0 1-48-48zm176 64a64 64 0 0 0-42 112c-40 4-72 32-72 68 0 9 7 16 16 28h196c9-12 16-19 16-28 0-36-32-64-72-68a64 64 0 0 0-42-112zm176 0v32h160v-32zm0 64v32h160v-32zm0 64v32h160v-32z"/>` },
  wrench: { w: 512, d: svg`<path d="M507.730 109.100c-2.240-9.030-13.540-12.090-20.120-5.510l-74.360 74.360-67.880-11.310-11.310-67.880 74.360-74.360c6.620-6.620 3.430-17.900-5.660-20.160-47.380-11.740-99.550.91-136.580 37.930-39.640 39.640-50.550 97.100-34.050 147.200L18.740 402.760c-24.990 24.990-24.990 65.510 0 90.500 24.990 24.990 65.510 24.990 90.500 0l213.210-213.210c50.120 16.710 107.470 5.680 147.370-34.220 37.070-37.070 49.700-89.320 37.910-136.730zM64 472c-13.250 0-24-10.750-24-24 0-13.260 10.750-24 24-24s24 10.740 24 24c0 13.250-10.750 24-24 24z"/>` },
  camera: { w: 512, d: svg`<path d="M512 144v288c0 26.500-21.500 48-48 48H48c-26.500 0-48-21.500-48-48V144c0-26.500 21.500-48 48-48h88l12.300-32.900c7-18.700 24.900-31.100 44.900-31.100h125.500c20 0 37.900 12.400 44.900 31.100L376 96h88c26.500 0 48 21.500 48 48zM376 288c0-66.200-53.800-120-120-120s-120 53.800-120 120 53.800 120 120 120 120-53.800 120-120zm-32 0c0 48.500-39.500 88-88 88s-88-39.500-88-88 39.500-88 88-88 88 39.500 88 88z"/>` },
  mail: { w: 512, d: svg`<path d="M502.300 190.800c3.900-3.100 9.700-.2 9.700 4.700V400c0 26.500-21.500 48-48 48H48c-26.500 0-48-21.500-48-48V195.600c0-5 5.700-7.800 9.700-4.700 22.400 17.400 52.100 39.500 154.100 113.600 21.100 15.400 56.700 47.800 92.200 47.600 35.700.3 72-32.800 92.300-47.600 102-74.100 131.600-96.300 154-113.700zM256 320c23.200.4 56.600-29.200 73.400-41.400 132.700-96.300 142.800-104.700 173.400-128.700 5.800-4.500 9.200-11.500 9.200-18.900v-19c0-26.500-21.500-48-48-48H48c-26.500 0-48 21.500-48 48v19c0 7.400 3.400 14.300 9.200 18.900 30.600 23.900 40.700 32.400 173.400 128.700 16.800 12.200 50.200 41.800 73.400 41.400z"/>` },
  headset: { w: 512, d: svg`<path d="M24 272v-16a232 232 0 0 1 464 0v150a82 82 0 0 1-82 82H250" fill="none" stroke="currentColor" stroke-width="46"/><path d="M192 208a32 32 0 0 0-32-32h-16a64 64 0 0 0-64 64v48a64 64 0 0 0 64 64h16a32 32 0 0 0 32-32zM320 208a32 32 0 0 1 32-32h16a64 64 0 0 1 64 64v48a64 64 0 0 1-64 64h-16a32 32 0 0 1-32-32z"/><rect x="200" y="416" width="120" height="96" rx="48"/>` },
  door: { w: 640, d: svg`<path d="M624 448h-80V113.500c0-27.200-21.500-49.400-48-49.400H384v64h96V512h144a16 16 0 0 0 16-16v-32a16 16 0 0 0-16-16z"/><path fill-rule="evenodd" d="M312.200 1L120 51.500c-14 4-24 17-24 32V448H16a16 16 0 0 0-16 16v32a16 16 0 0 0 16 16h336V33c0-21-20-37-39.800-32zM264 288c-13 0-24-14-24-32s11-32 24-32 24 14 24 32-11 32-24 32z"/>` },
};

const icon = (name: string, size: number, box = 24) =>
  html`<svg class="ico" width=${size} height=${size} viewBox="0 0 ${box} ${box}">${art[name]}</svg>`;

/* Text fitted to a known width, by letter spacing or, with "wide", by widening the letters. */
@customElement("fit-text")
class FitText extends LitElement {
  @property() text = "";
  @property({ type: Number }) w = 0;
  @property({ type: Boolean }) wide = false;
  static styles = css`
    :host { display: inline-block; white-space: pre; flex: none; }
    .t { display: inline-block; transform-origin: 0 50%; }
  `;
  render() {
    return html`<span class="t">${this.text}</span>`;
  }
  updated() {
    const el = this.renderRoot.querySelector<HTMLElement>(".t");
    if (!el || !this.w) return;
    el.style.letterSpacing = "0px";
    el.style.transform = "none";
    const natural = el.getBoundingClientRect().width;
    if (this.wide) {
      el.style.transform = `scaleX(${(this.w / natural).toFixed(4)})`;
      this.style.width = `${this.w}px`;
    } else {
      el.style.letterSpacing = `${((this.w - natural) / this.text.length).toFixed(3)}px`;
    }
  }
}

const tabs: [string, string, number][] = [
  ["chip", "Chip", 29.5], ["gpt", "New", 29.5], ["klap", "API d", 33.5], ["firebase", "psico", 33.5], ["tds", "Esse", 28],
  ["angular", "psico", 33.5], ["logi", "Logi", 28], ["hbo", "HBO", 31], ["google", "psico", 33.5], ["hexa", "Psico", 33.5],
  ["onp", "Psico", 33.5], ["butterfly", "Psico", 33.5], ["bulb", "Psico", 33.5], ["flash", "Flash", 33], ["smile", "T", 0],
  ["smile", "Terap", 34], ["smile", "Terap", 34], ["smile", "Terap", 34], ["gmail", "Reci", 28], ["gmail", "Reci", 28],
];
const activeTab = 14;

@customElement("tab-strip")
class TabStrip extends LitElement {
  static styles = css`
    :host { display: flex; height: 43px; background: #dee1e6; padding-left: 11px; box-sizing: border-box;
      font: 15px/20px "Open Sans", sans-serif; color: #45494d; }
    .ico { display: block; flex: none; }
    .tab { width: 78.77px; box-sizing: border-box; display: flex; align-items: center; padding: 0 4px 0 9px; gap: 10px;
      position: relative; height: 42px; flex: none; }
    .tab.mail { width: 77.6px; }
    .tab::after { content: ""; position: absolute; right: -0.5px; top: 9px; height: 25px; width: 1.3px; background: #85888d; }
    .tab.plain::after { display: none; }
    .tab.on { background: #fff; border-radius: 10px 10px 0 0; height: 43px; gap: 9px; }
    .tab.on::before { content: ""; position: absolute; bottom: 0; left: -10px; right: -10px; height: 10px;
      background: radial-gradient(circle at 0 0, transparent 10px, #fff 10.5px) left / 10px 10px no-repeat,
        radial-gradient(circle at 100% 0, transparent 10px, #fff 10.5px) right / 10px 10px no-repeat; }
    .name { flex: 1; white-space: nowrap; mask-image: linear-gradient(90deg, #000 55%, transparent 86%); }
    .tab.on .name { flex: none; width: 8px; mask-image: linear-gradient(90deg, #000 30%, transparent 80%); }
    .tab.on .ico + .name + .ico { margin-left: -1.5px; }
    .add { padding-left: 17px; display: flex; align-items: center; }
    .win { margin-left: auto; display: flex; height: 37px; align-items: center; gap: 37.300px; padding-right: 19px; }
  `;
  render() {
    return html`
      ${tabs.map(([ic, name, w], i) => html`
        <div class=${classMap({ tab: true, on: i === activeTab, plain: i === activeTab || i === activeTab - 1, mail: i > 17 })}>
          ${icon(ic, 20)}<span class="name"><fit-text .text=${name} .w=${w}></fit-text></span>${i === activeTab ? icon("x", 14) : nothing}
        </div>`)}
      <div class="add">${icon("newtab", 20)}</div>
      <div class="win">${["wchev", "wmin", "wmax", "wclose"].map((n) => icon(n, 20))}</div>
    `;
  }
}

@customElement("address-row")
class AddressRow extends LitElement {
  static styles = css`
    :host { display: flex; height: 45px; align-items: center; background: #fff; box-sizing: border-box; padding: 0 7.500px 0 16px;
      font: 17.5px/24px "Open Sans", sans-serif; color: #6a6d71; }
    .ico { display: block; flex: none; }
    .nav { display: flex; gap: 17.500px; width: 119px; flex: none; align-items: center; }
    .pill { width: 1410px; height: 35px; border-radius: 18px; background: #f1f3f4; display: flex; align-items: center; flex: none;
      box-sizing: border-box; padding: 0 7px 0 14px; }
    .url { padding-left: 12px; display: flex; padding-bottom: 1px; }
    .domain { color: #202124; }
    .acts { margin-left: auto; display: flex; align-items: center; }
    .slot { width: 40px; height: 30px; display: grid; place-items: center; }
    .slot.hot { background: #dddfe1; border-radius: 15px; }
    .slot:last-child { width: 31px; padding-left: 4px; }
    .ext { margin-left: 7.500px; display: flex; align-items: center; flex: none; }
    .cell { width: 40px; display: grid; place-items: center; position: relative; }
    .badge { position: absolute; left: 17px; top: 12.500px; width: 20px; height: 15px; border-radius: 2px; background: #6b38ba;
      color: #fff; font: 700 11.5px/15px "Open Sans", sans-serif; text-align: center; }
  `;
  render() {
    const ext: [string, number, number][] = [["fox", 20, 24], ["zoomcam", 20.5, 24], ["stack", 20, 24], ["hand", 20.5, 24],
      ["magnify", 20, 24], ["puzzle", 20, 24], ["panel", 19, 24], ["avatar", 27, 32], ["dots", 18, 24]];
    return html`
      <div class="nav">${["back", "fwd", "reload"].map((n) => icon(n, n === "reload" ? 21 : 23))}</div>
      <div class="pill">
        ${icon("lock", 17)}
        <div class="url"><fit-text class="domain" text="terapi-app.com" .w=${118}></fit-text><fit-text text="/cl/app/onboarding/recommendation#" .w=${302}></fit-text></div>
        <div class="acts">
          <span class="slot">${icon("key", 20)}</span><span class="slot hot">${icon("find", 20)}</span>
          <span class="slot">${icon("share", 20)}</span><span class="slot">${icon("star", 21)}</span>
        </div>
      </div>
      <div class="ext">${ext.map(([n, s, b]) => html`<span class="cell">${icon(n, s, b)}${n === "stack" ? html`<span class="badge">32</span>` : nothing}</span>`)}</div>
    `;
  }
}

const bookmarks: [string, string, number][] = [
  ["gmail", "", 0], ["youtube", "", 0], ["maps", "", 0], ["translate", "", 0], ["drive", "", 0], ["github", "", 0],
  ["folder", "Klap", 29.5], ["folder", "Capital", 46], ["folder", "Forex", 36.5], ["folder", "Stocks", 42.5], ["folder", "Solidity", 49],
  ["sheets", "FP", 16.5], ["bars", "", 0], ["indie", "", 0], ["cblue", "", 0], ["bear", "", 0], ["cactus", "", 0], ["medium", "", 0],
  ["folder", "Freelance", 64], ["folder", "", 0],
];

@customElement("bookmark-row")
class BookmarkRow extends LitElement {
  static styles = css`
    :host { display: flex; height: 36px; padding: 0 0 4px 18px; gap: 20px; align-items: center;
      background: #fff; border-bottom: 1px solid #d8dadd; font: 15px/20px "Open Sans", sans-serif; color: #3c4043; }
    .ico { display: block; flex: none; }
    .mark { display: flex; gap: 10px; align-items: center; }
    fit-text { padding-bottom: 2px; }
  `;
  render() {
    return bookmarks.map(([ic, name, w]) => html`<span class="mark">${icon(ic, 20)}${name ? html`<fit-text .text=${name} .w=${w}></fit-text>` : nothing}</span>`);
  }
}

const menu: [string, string, number, number, boolean?][] = [
  ["home", "Tu Panel", 26, 74], ["comments", "Sala de chat", 26, 111], ["award", "Tu Avance", 17.5, 91.500],
  ["list", "Reserva Hora", 22, 116], ["calendar", "Próximas Consultas", 20, 172], ["money", "Tus Pagos", 26, 88.500],
  ["gift", "Promociones", 26, 115], ["idcard", "Mi psicólogo", 26, 110.500, true], ["wrench", "Perfil", 26, 43, true],
  ["camera", "Sala de Prueba", 22, 133], ["mail", "Contáctanos", 26, 115], ["headset", "Servicio al Cliente", 26, 155.500], ["door", "Salir", 26, 38],
];

@customElement("side-menu")
class SideMenu extends LitElement {
  static styles = css`
    :host { display: block; width: 313px; border-right: 1px solid #cfcfd2; box-sizing: content-box; flex: none;
      font: 18px/24px Inter, sans-serif; color: #1b1b1b; }
    .logo { height: 68.700px; line-height: 74px; text-align: center; font-size: 39px; color: #1a1a1a; }
    .item { height: 59.5px; display: flex; align-items: center; padding: 0 17.500px 0 22.500px; }
    .box { height: 18px; display: flex; justify-content: center; }
    .box.wide { width: 23px; margin-right: 3.500px; }
    .box.tight { margin-right: 4.500px; }
    .box svg { height: 18px; display: block; fill: currentColor; overflow: visible; }
    .chev { margin-left: auto; width: 10px; height: 12px; fill: none; stroke: #1b1b1b; stroke-width: 1.400; }
    fit-text { font-weight: 300; }
    .logo fit-text { font-weight: 600; }
  `;
  render() {
    return html`
      <div class="logo"><fit-text wide text="terapi" .w=${108}></fit-text></div>
      ${menu.map(([g, label, adv, w, more]) => html`
        <div class="item">
          <span class=${classMap({ box: true, wide: adv === 26, tight: adv !== 26 })}>
            <svg width=${((glyphs[g].w / 512) * 18).toFixed(2)} viewBox="0 0 ${glyphs[g].w} 512">${glyphs[g].d}</svg>
          </span>
          <fit-text wide .text=${label} .w=${w}></fit-text>
          ${more ? html`<svg class="chev" viewBox="0 0 10 12"><path d="M2.500 2l4.500 4-4.500 4"/></svg>` : nothing}
        </div>`)}
    `;
  }
}

const answerWidths: Record<string, number> = {
  "Totalmente de acuerdo": 207, "De acuerdo": 103, "Ni en acuerdo ni en desacuerdo": 281,
  "En desacuerdo": 131.5, "Totalmente en desacuerdo": 238.5, "No sé / No quiero responder": 245,
};
const answers = Object.keys(answerWidths);

@customElement("chat-panel")
class ChatPanel extends LitElement {
  static styles = css`
    :host { display: flex; flex-direction: column; flex: 1; min-width: 0; background: #fff; font: 18px/24px Inter, sans-serif; color: #222; }
    .top { height: 65px; display: flex; align-items: center; justify-content: flex-end; padding: 2px 21.500px 0 0; box-sizing: border-box;
      color: #7a3cbc; font-size: 15.500px; font-weight: 400; flex: none; }
    .log { flex: 1; overflow: hidden; display: flex; flex-direction: column; padding: 0 20px 0 14px; }
    .group { display: flex; flex-direction: column; gap: 5.350px; width: 320px; align-self: flex-end; flex: none; }
    .group.first { margin-top: -8.800px; }
    .group.second { margin-top: 5px; }
    .answer { height: 64.3px; border-radius: 20px; background: #f5f0fa; color: #7a3cbc; display: flex; align-items: center;
      padding-left: 20px; font-weight: 300; flex: none; }
    .mine { align-self: flex-end; margin-top: 15.200px; width: 278px; height: 60px; border-radius: 20px; background: #f3f3f3; flex: none;
      display: flex; align-items: center; padding-left: 19.500px; box-sizing: border-box; font-weight: 300; }
    .bot { margin-top: 5px; display: flex; align-items: flex-end; gap: 10px; flex: none; }
    .ico { display: block; }
    .bubble { width: 777px; height: 60px; border-radius: 20px; box-sizing: border-box; padding-left: 19px; display: flex; align-items: center;
      color: #fff; background: linear-gradient(170deg, #d41f90, #ea1889); }
  `;
  private list(cls: string, items: string[]) {
    return html`<div class="group ${cls}">${items.map((a) => html`<div class="answer"><fit-text wide .text=${a} .w=${answerWidths[a]}></fit-text></div>`)}</div>`;
  }
  render() {
    return html`
      <div class="top"><fit-text wide text="Omitir" .w=${47.5}></fit-text></div>
      <div class="log">
        ${this.list("first", answers.slice(3))}
        <div class="mine"><fit-text wide text="Totalmente en desacuerdo" .w=${238.5}></fit-text></div>
        <div class="bot">${icon("smile", 40)}
          <div class="bubble"><fit-text wide text="3. Te ves a ti mismo(a) como una persona que se dedica a hacer su trabajo a fondo" .w=${739}></fit-text></div>
        </div>
        ${this.list("second", answers)}
      </div>
    `;
  }
}

const apps: [string, number, string][] = [
  ["taskview", 30, ""], ["explorer", 30, ""], ["vscode", 30, "run"], ["tradingview", 30, ""], ["chrome", 30, "active"],
  ["cmd", 28, "run"], ["kraken", 28, "run"], ["paint", 29, "run"],
];

@customElement("task-bar")
class TaskBar extends LitElement {
  static styles = css`
    :host { display: flex; height: 60px; box-sizing: border-box; align-items: center; padding: 0 19px 0 660px;
      background: linear-gradient(90deg, #142d32 0, #142b35 640px, #14263c 1080px, #1c233b 1320px, #2b2236 1560px, #38212c 1740px, #42201f 1920px);
      color: #fff; font: 15px/20px "Open Sans", sans-serif; }
    .ico { display: block; }
    .find { margin-left: 17px; width: 125px; height: 40px; border-radius: 20px; background: #243a46; box-shadow: inset 0 1px #334955;
      display: flex; align-items: center; gap: 6px; padding-left: 30px; box-sizing: border-box; margin-right: 7px; }
    .app { width: 50px; height: 50px; margin-left: 0; margin-right: 4.950px; border-radius: 5px; display: grid; place-items: center; position: relative; }
    .app.active { background: #24344a; box-shadow: inset 0 0 0 1px #2d3c51; }
    .app.run::after, .app.active::after { content: ""; position: absolute; bottom: 1px; left: 21px; width: 8px; height: 4px; border-radius: 2px; background: #98a1ab; }
    .app.active::after { left: 15px; width: 20px; background: #4cc2ff; }
    .tray { margin-left: auto; display: flex; align-items: center; }
    .lang { text-align: center; width: 30px; margin: 0 22px 0 17px; }
    .net { display: flex; gap: 10px; margin-right: 18px; }
    .clock { width: 68px; display: flex; flex-direction: column; align-items: flex-end; padding-bottom: 2px; }
    .pair { display: flex; gap: 11px; align-items: center; }
  `;
  render() {
    return html`
      ${icon("start", 29)}
      <div class="find">${icon("search", 18)}<fit-text text="Buscar" .w=${45}></fit-text></div>
      ${apps.map(([n, s, state]) => html`<span class="app ${state}">${icon(n, s)}</span>`)}
      <div class="tray">
        <div class="pair">${icon("tchev", 18)}${icon("sync", 21)}</div>
        <div class="lang"><fit-text text="ESP" .w=${25}></fit-text><fit-text text="LAA" .w=${27}></fit-text></div>
        <div class="net">${icon("wifi", 20)}${icon("volume", 20)}${icon("battery", 20)}</div>
        <div class="clock"><fit-text text="6:04 PM" .w=${54}></fit-text><fit-text text="1/29/2023" .w=${68}></fit-text></div>
      </div>
    `;
  }
}

@customElement("app-root")
class AppRoot extends LitElement {
  static styles = css`
    :host { display: flex; flex-direction: column; width: 1920px; height: 1080px; overflow: hidden; position: relative; background: #fff; }
    .page { flex: 1; display: flex; min-height: 0; }
    .ico { display: block; }
    .findbar { position: absolute; left: 1136px; top: 81px; width: 410px; height: 62px; box-sizing: border-box; border-radius: 5px; background: #fff;
      border: 1px solid #c4c6c9; box-shadow: 0 2px 5px rgba(0, 0, 0, 0.28); display: flex; align-items: center; justify-content: flex-end;
      color: #4d5156; padding-right: 21.500px; gap: 24px; }
    .rule { width: 2px; height: 40px; background: #d9dbde; margin-right: -3px; }
    .status { position: absolute; left: 0; top: 992px; width: 425px; height: 28px; box-sizing: border-box; padding-left: 5.500px; background: #dee1e6;
      border-top-right-radius: 5px; font: 15px/28px "Open Sans", sans-serif; color: #44484c; }
  `;
  render() {
    return html`
      <tab-strip></tab-strip>
      <address-row></address-row>
      <bookmark-row></bookmark-row>
      <div class="page"><side-menu></side-menu><chat-panel></chat-panel></div>
      <task-bar></task-bar>
      <div class="findbar"><span class="rule"></span>${icon("up", 16)}${icon("down", 16)}${icon("x", 16)}</div>
      <div class="status"><fit-text text="https://terapi-app.com/cl/app/onboarding/recommendation#" .w=${409}></fit-text></div>
    `;
  }
}
